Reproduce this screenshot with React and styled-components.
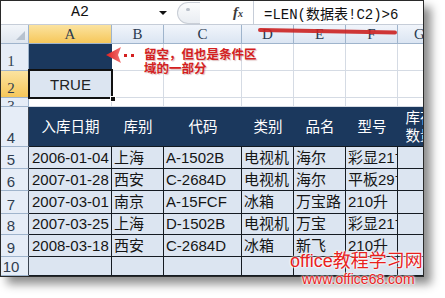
import React from "react";
import styled, { createGlobalStyle } from "styled-components";

const GlobalStyle = createGlobalStyle`
  html, body {
    margin: 0;
    padding: 0;
    background: #ffffff;
  }
`;

const SANS = `"Liberation Sans", "Noto Sans CJK SC", sans-serif`;
const NAVY = "#1b385d";

const Page = styled.div`
  position: relative;
  width: 445px;
  height: 298px;
  overflow: hidden;
  background: #fff;
`;

const Frame = styled.div`
  width: 422px;
  height: 275px;
  border: 1px solid #2a2a2a;
  overflow: hidden;
  background: #fff;
  box-shadow: 7px 7px 9px rgba(0, 0, 0, 0.45);
`;

// ---------- formula bar ----------
const FormulaBar = styled.div`
  display: flex;
  align-items: center;
  height: 23px;
  border-bottom: 1px solid #c6cdd8;
  background: #fff;
`;

const NameBox = styled.div`
  display: flex;
  align-items: center;
  width: 170px;
  height: 100%;
  font-family: "Liberation Mono", monospace;
  font-size: 15px;
  color: #111;
`;

const NameText = styled.div`
  flex: 1;
  text-align: center;
`;

const DropArrow = styled.div`
  width: 0;
  height: 0;
  margin-right: 4px;
  border-left: 4px solid transparent;
  border-right: 4px solid transparent;
  border-top: 4px solid #111;
`;

const ExpandButton = styled.div`
  position: relative;
  width: 22px;
  height: 20px;
  margin-left: 6px;
  border: 1px solid #c9ced6;
  border-right: none;
  border-radius: 12px 0 0 12px;
  background: linear-gradient(#fbfcfd, #e9edf2);

  &::after {
    content: "";
    position: absolute;
    top: 5px;
    left: 8px;
    width: 4px;
    height: 3px;
    border-radius: 2px;
    background: #b9c0ca;
  }
`;

const Fx = styled.div`
  margin-left: 33px;
  width: 20px;
  font-family: "Liberation Serif", serif;
  font-style: italic;
  font-weight: bold;
  font-size: 15px;
  color: #3b3b3b;

  sub {
    font-size: 10px;
    vertical-align: baseline;
  }
`;

const FormulaInput = styled.div`
  flex: 1;
  height: 100%;
  display: flex;
  align-items: center;
  padding-left: 10px;
  border-left: 1px solid #c6cdd8;
  font-family: "Liberation Mono", "Noto Sans CJK SC", monospace;
  font-size: 14px;
  color: #111;
  white-space: nowrap;
`;

// ---------- grid ----------
const Sheet = styled.div`
  display: grid;
  grid-template-columns: 28px 83px 52px 78px 52px 52px 52px 44px;
  grid-template-rows: 19px 27px 27px 9px 40px 22px 22px 23px 21px 22px 19px;
`;

const Corner = styled.div`
  position: relative;
  box-sizing: border-box;
  border-right: 1px solid #9fb4cc;
  border-bottom: 1px solid #9fb4cc;
  background: linear-gradient(#f3f6fa, #dfe6ef);

  &::after {
    content: "";
    position: absolute;
    right: 3px;
    bottom: 3px;
    width: 0;
    height: 0;
    border-left: 9px solid transparent;
    border-bottom: 9px solid #b7c2cf;
  }
`;

const ColHead = styled.div`
  box-sizing: border-box;
  display: flex;
  align-items: flex-end;
  justify-content: center;
  border-right: 1px solid #9fb4cc;
  border-bottom: 1px solid #9fb4cc;
  background: ${(p) =>
    p.$active
      ? "linear-gradient(#fbe3a0, #f6c75a)"
      : "linear-gradient(#f1f5fb, #dbe5f2)"};
  font-family: "Liberation Serif", serif;
  font-size: 15px;
  line-height: 17px;
  color: #2a3a50;
`;

const RowHead = styled.div`
  box-sizing: border-box;
  display: flex;
  align-items: ${(p) => (p.$top ? "flex-start" : "flex-end")};
  justify-content: center;
  padding-right: 7px;
  border-right: 1px solid ${(p) => (p.$table ? "#3a4350" : "#9fb4cc")};
  border-bottom: 1px solid #9fb4cc;
  background: ${(p) =>
    p.$active ? "linear-gradient(#fbe3a0, #f6c75a)" : "#e6edf7"};
  font-family: ${(p) => (p.$serif ? `"Liberation Serif", serif` : SANS)};
  font-size: 15px;
  line-height: 17px;
  color: #2f3d4f;
  overflow: hidden;
`;

const Blank = styled.div`
  box-sizing: border-box;
  border-right: 1px solid #d5dbe4;
  border-bottom: 1px solid #d5dbe4;
  background: #fff;
`;

const NavyCell = styled.div`
  box-sizing: border-box;
  background: ${NAVY};
  border-bottom: 1px solid #0f2238;
`;

const HeadCell = styled.div`
  box-sizing: border-box;
  display: flex;
  align-items: center;
  justify-content: center;
  text-align: center;
  background: ${NAVY};
  border-bottom: 1px solid #101820;
  font-family: ${SANS};
  font-size: 14.5px;
  line-height: 18px;
  color: #fff;
  white-space: nowrap;
`;

const DataCell = styled.div`
  box-sizing: border-box;
  display: flex;
  align-items: center;
  padding-left: ${(p) => (p.$pad ? p.$pad : 2)}px;
  background: #dce5f1;
  border-right: 1px solid #151b22;
  border-bottom: 1px solid #151b22;
  font-family: ${SANS};
  font-size: 15px;
  line-height: 18px;
  color: #151515;
  white-space: nowrap;
  overflow: hidden;
`;

const SelectedCell = styled.div`
  position: relative;
  z-index: 2;
  box-sizing: border-box;
  display: flex;
  align-items: center;
  justify-content: center;
  background: #dce5f1;
  font-family: ${SANS};
  font-size: 15px;
  color: #222;

  &::after {
    content: "";
    position: absolute;
    top: -2px;
    left: -1px;
    right: -1px;
    bottom: -1px;
    border: 2px solid #111;
  }

  &::before {
    content: "";
    position: absolute;
    right: -4px;
    bottom: -4px;
    width: 4px;
    height: 4px;
    background: #111;
    border: 1px solid #fff;
    z-index: 3;
  }
`;

// ---------- overlays ----------
const Overlay = styled.svg`
  position: absolute;
  left: 0;
  top: 0;
  pointer-events: none;
`;

const Note = styled.div`
  position: absolute;
  left: 144px;
  top: 47px;
  font-family: "Noto Sans CJK SC", sans-serif;
  font-weight: bold;
  font-size: 12.5px;
  line-height: 14px;
  color: #d41f1f;
  text-shadow: 1px 1px 1px rgba(120, 0, 0, 0.25);
`;

const Watermark = styled.div`
  position: absolute;
  left: 290px;
  top: 251px;
  font-family: ${SANS};
  color: #e8211d;
  text-shadow: 0 0 2px #fff, 0 0 2px #fff, 0 0 3px #fff;
`;

const MarkTitle = styled.div`
  font-size: 18px;
  line-height: 21px;
  white-space: nowrap;
`;

const MarkUrl = styled.div`
  margin-left: 12px;
  font-size: 14px;
  line-height: 14px;
  white-space: nowrap;
`;

const cols = ["A", "B", "C", "D", "E", "F", "G"];
const heads = ["入库日期", "库别", "代码", "类别", "品名", "型号"];
const records = [
  ["2006-01-04", "上海", "A-1502B", "电视机", "海尔", "彩显21寸"],
  ["2007-01-28", "西安", "C-2684D", "电视机", "海尔", "平板29寸"],
  ["2007-03-01", "南京", "A-15FCF", "冰箱", "万宝路", "210升"],
  ["2007-03-25", "上海", "D-1502B", "电视机", "万宝", "彩显21寸"],
  ["2008-03-18", "西安", "C-2684D", "冰箱", "新飞", "210升"],
  ["", "", "", "", "", ""],
];

export default function App() {
  return (
    <Page>
      <GlobalStyle />
      <Frame>
        <FormulaBar>
          <NameBox>
            <NameText>A2</NameText>
            <DropArrow />
          </NameBox>
          <ExpandButton />
          <Fx>
            f<sub>x</sub>
          </Fx>
          <FormulaInput>=LEN(数据表!C2)&gt;6</FormulaInput>
        </FormulaBar>

        <Sheet>
          <Corner />
          {cols.map((c) => (
            <ColHead key={c} $active={c === "A"}>
              {c}
            </ColHead>
          ))}

          {/* rows 1-3: criteria area */}
          <RowHead $serif>1</RowHead>
          <NavyCell />
          {cols.slice(1).map((c) => (
            <Blank key={"r1" + c} />
          ))}

          <RowHead $serif $active>
            2
          </RowHead>
          <SelectedCell>TRUE</SelectedCell>
          {cols.slice(1).map((c) => (
            <Blank key={"r2" + c} />
          ))}

          <RowHead $serif $top>
            3
          </RowHead>
          {cols.map((c) => (
            <Blank key={"r3" + c} />
          ))}

          {/* row 4: table header */}
          <RowHead $table>4</RowHead>
          {heads.map((h) => (
            <HeadCell key={h}>{h}</HeadCell>
          ))}
          <HeadCell>
            库存
            <br />
            数量
          </HeadCell>

          {records.map((rec, i) => (
            <React.Fragment key={i}>
              <RowHead $table>{i + 5}</RowHead>
              {rec.map((v, j) => (
                <DataCell key={j} $pad={j === 0 ? 3 : 2}>
                  {v}
                </DataCell>
              ))}
              <DataCell />
            </React.Fragment>
          ))}
        </Sheet>
      </Frame>

      <Overlay width="445" height="298">
        <defs>
          <linearGradient id="arrowFill" x1="0" x2="1">
            <stop offset="0" stopColor="#e02020" />
            <stop offset="1" stopColor="#f07070" />
          </linearGradient>
        </defs>
        <line
          x1="260"
          y1="30"
          x2="395"
          y2="32.5"
          stroke="#cc2222"
          strokeWidth="4"
          strokeLinecap="round"
          opacity="0.9"
        />
        <path d="M106 55 L121 47 L118 55 L121 63 Z" fill="url(#arrowFill)" />
        <rect x="124" y="54" width="3" height="3" fill="#d42020" />
        <rect x="131" y="54" width="3" height="3" fill="#d42020" />
      </Overlay>

      <Note>
        留空，但也是条件区
        <br />
        域的一部分
      </Note>

      <Watermark>
        <MarkTitle>office教程学习网</MarkTitle>
        <MarkUrl>www.office68.com</MarkUrl>
      </Watermark>
    </Page>
  );
}
